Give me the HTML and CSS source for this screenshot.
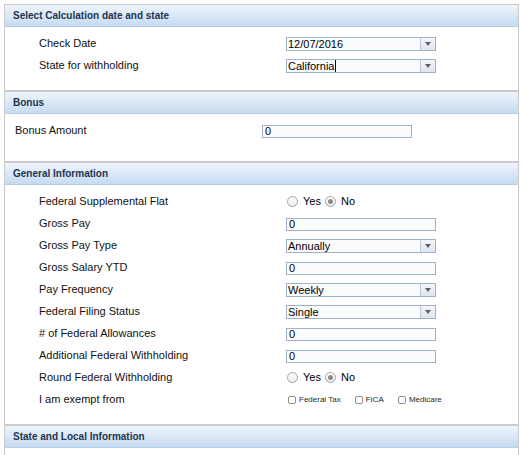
FILE: index.html
```html
<!DOCTYPE html>
<html>
<head>
<meta charset="utf-8">
<title>Calculator</title>
<link rel="stylesheet" href="styles.css">
</head>
<body>
<div class="panel">
  <section class="section">
    <div class="section-header">Select Calculation date and state</div>
    <div class="section-body indented">
      <div class="row">
        <div class="label">Check Date</div>
        <div class="combo"><span class="combo-value">12/07/2016</span><span class="combo-btn"><span class="tri"></span></span></div>
      </div>
      <div class="row">
        <div class="label">State for withholding</div>
        <div class="combo"><span class="combo-value">California<span class="cursor"></span></span><span class="combo-btn"><span class="tri"></span></span></div>
      </div>
    </div>
  </section>

  <section class="section">
    <div class="section-header">Bonus</div>
    <div class="section-body flush">
      <div class="row">
        <div class="label">Bonus Amount</div>
        <div class="textbox">0</div>
      </div>
    </div>
  </section>

  <section class="section">
    <div class="section-header">General Information</div>
    <div class="section-body indented">
      <div class="row">
        <div class="label">Federal Supplemental Flat</div>
        <div class="radios">
          <span class="radio"></span><span class="radio-text">Yes</span>
          <span class="radio checked"></span><span class="radio-text">No</span>
        </div>
      </div>
      <div class="row">
        <div class="label">Gross Pay</div>
        <div class="textbox">0</div>
      </div>
      <div class="row">
        <div class="label">Gross Pay Type</div>
        <div class="combo"><span class="combo-value">Annually</span><span class="combo-btn"><span class="tri"></span></span></div>
      </div>
      <div class="row">
        <div class="label">Gross Salary YTD</div>
        <div class="textbox">0</div>
      </div>
      <div class="row">
        <div class="label">Pay Frequency</div>
        <div class="combo"><span class="combo-value">Weekly</span><span class="combo-btn"><span class="tri"></span></span></div>
      </div>
      <div class="row">
        <div class="label">Federal Filing Status</div>
        <div class="combo"><span class="combo-value">Single</span><span class="combo-btn"><span class="tri"></span></span></div>
      </div>
      <div class="row">
        <div class="label"># of Federal Allowances</div>
        <div class="textbox">0</div>
      </div>
      <div class="row">
        <div class="label">Additional Federal Withholding</div>
        <div class="textbox">0</div>
      </div>
      <div class="row">
        <div class="label">Round Federal Withholding</div>
        <div class="radios">
          <span class="radio"></span><span class="radio-text">Yes</span>
          <span class="radio checked"></span><span class="radio-text">No</span>
        </div>
      </div>
      <div class="row">
        <div class="label">I am exempt from</div>
        <div class="checks">
          <span class="check-item"><span class="checkbox"></span><span class="check-text">Federal Tax</span></span>
          <span class="check-item"><span class="checkbox"></span><span class="check-text">FICA</span></span>
          <span class="check-item"><span class="checkbox"></span><span class="check-text">Medicare</span></span>
        </div>
      </div>
    </div>
  </section>

  <section class="section">
    <div class="section-header">State and Local Information</div>
  </section>
</div>
</body>
</html>
```

FILE: styles.css
```css
* { box-sizing: border-box; }

html, body {
  margin: 0;
  padding: 0;
  background: #fff;
}

body {
  font-family: "Liberation Sans", Arial, Helvetica, sans-serif;
  font-size: 11px;
  color: #111;
}

.panel {
  margin: 4px 0 0 4px;
  width: 515px;
  min-height: 460px;
  border-top: 1px solid #c9c9c9;
  border-left: 1px solid #c9c9c9;
  border-right: 1px solid #c9c9c9;
}

.section + .section {
  border-top: 2px solid #cbcbcb;
}

.section-header {
  height: 22px;
  line-height: 21px;
  padding-left: 8px;
  font-size: 10px;
  font-weight: bold;
  color: #223550;
  background: linear-gradient(to bottom, #eef4fc 0%, #dde9f7 45%, #c6dbf1 100%);
  border-bottom: 1px solid #b7cee8;
}

.section-body {
  padding-top: 5px;
  padding-bottom: 14px;
}

.section-body.indented { padding-left: 34px; }
.section-body.flush { padding-left: 10px; padding-bottom: 20px; }

.row {
  display: flex;
  align-items: center;
  height: 22px;
}

.label {
  flex: none;
  width: 247px;
}

.textbox {
  width: 150px;
  height: 13px;
  line-height: 11px;
  padding-left: 2px;
  border: 1px solid #9fb0c8;
  background: #fbfcfe;
  color: #000;
  margin-top: 2px;
}

.combo {
  display: flex;
  width: 150px;
  height: 14px;
  border: 1px solid #9fb0c8;
  background: #fbfcfe;
  margin-top: 1px;
}

.combo-value {
  flex: 1;
  line-height: 12px;
  padding-left: 1px;
  color: #000;
  display: flex;
  align-items: center;
}

.cursor {
  display: inline-block;
  width: 0;
  height: 12px;
  border-left: 1px solid #000;
  margin-left: 1px;
}

.combo-btn {
  flex: none;
  width: 15px;
  border-left: 1px solid #b9c6d6;
  background: linear-gradient(to bottom, #f3f6fa 0%, #dfe6ef 100%);
  display: flex;
  align-items: center;
  justify-content: center;
}

.tri {
  width: 0;
  height: 0;
  border-left: 3px solid transparent;
  border-right: 3px solid transparent;
  border-top: 4px solid #5c6066;
}

.radios {
  display: flex;
  align-items: center;
  padding-left: 1px;
}

.radio {
  width: 11px;
  height: 11px;
  border-radius: 50%;
  border: 1px solid #a3a3a3;
  background: linear-gradient(to bottom, #ffffff 0%, #ececec 100%);
  display: flex;
  align-items: center;
  justify-content: center;
}

.radio.checked::after {
  content: "";
  width: 5px;
  height: 5px;
  border-radius: 50%;
  background: #8a8a8a;
}

.radio-text {
  margin-left: 5px;
  margin-right: 4px;
  color: #000;
}

.radio-text + .radio { margin-left: 0; }

.checks {
  display: flex;
  align-items: center;
  padding-left: 2px;
  gap: 14px;
  font-size: 8px;
  color: #2a2a2a;
}

.check-item {
  display: flex;
  align-items: center;
}

.checkbox {
  width: 8px;
  height: 8px;
  border: 1px solid #8e8e8e;
  border-radius: 2px;
  background: #fff;
  margin-top: 2px;
}

.check-text {
  margin-left: 3px;
}
```
